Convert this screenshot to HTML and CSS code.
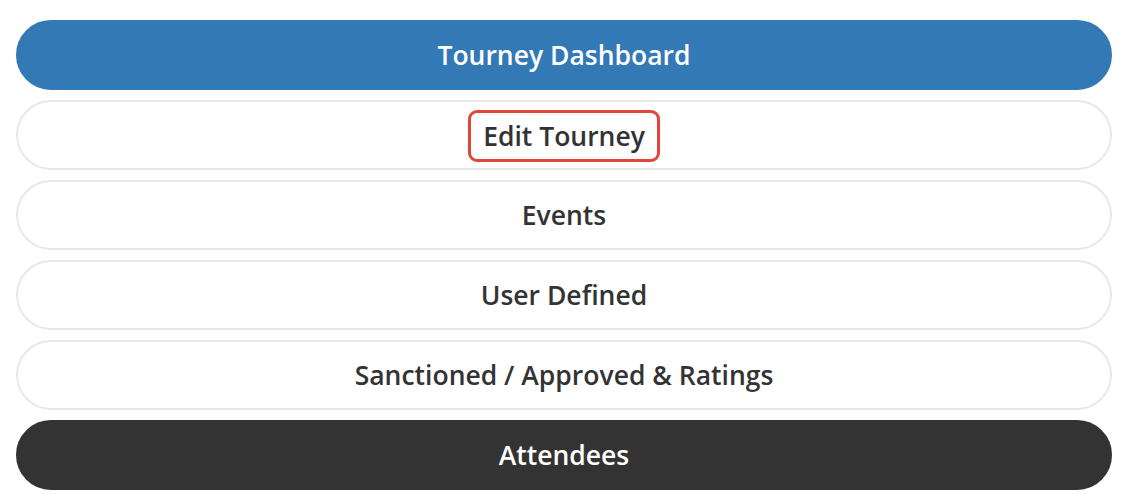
FILE: index.html
```html
<!DOCTYPE html>
<html>
<head>
<meta charset="utf-8">
<link rel="stylesheet" href="styles.css">
</head>
<body>
<nav class="menu">
  <a class="pill pill-primary">Tourney Dashboard</a>
  <a class="pill"><span class="highlight">Edit Tourney</span></a>
  <a class="pill">Events</a>
  <a class="pill">User Defined</a>
  <a class="pill">Sanctioned / Approved &amp; Ratings</a>
  <a class="pill pill-dark">Attendees</a>
</nav>
</body>
</html>
```
FILE: styles.css
```css
html, body {
  margin: 0;
  padding: 0;
  background: #ffffff;
}
body {
  font-family: "Open Sans", "Noto Sans", sans-serif;
}
.menu {
  display: flex;
  flex-direction: column;
  gap: 10px;
  padding: 20px 29px 0 16px;
}
.pill {
  box-sizing: border-box;
  height: 70px;
  display: flex;
  align-items: center;
  justify-content: center;
  border-radius: 35px;
  border: 2px solid #e8e8e8;
  background: #ffffff;
  color: #333333;
  font-size: 26.5px;
  font-weight: 600;
  line-height: 36px;
  text-decoration: none;
}
.pill-primary {
  background: #3379b5;
  border-color: #3379b5;
  color: #ffffff;
}
.pill-dark {
  background: #333333;
  border-color: #333333;
  color: #ffffff;
}
.highlight {
  border: 3px solid #e0473a;
  border-radius: 9px;
  padding: 5px 12px;
  margin-top: 2px;
}
```
